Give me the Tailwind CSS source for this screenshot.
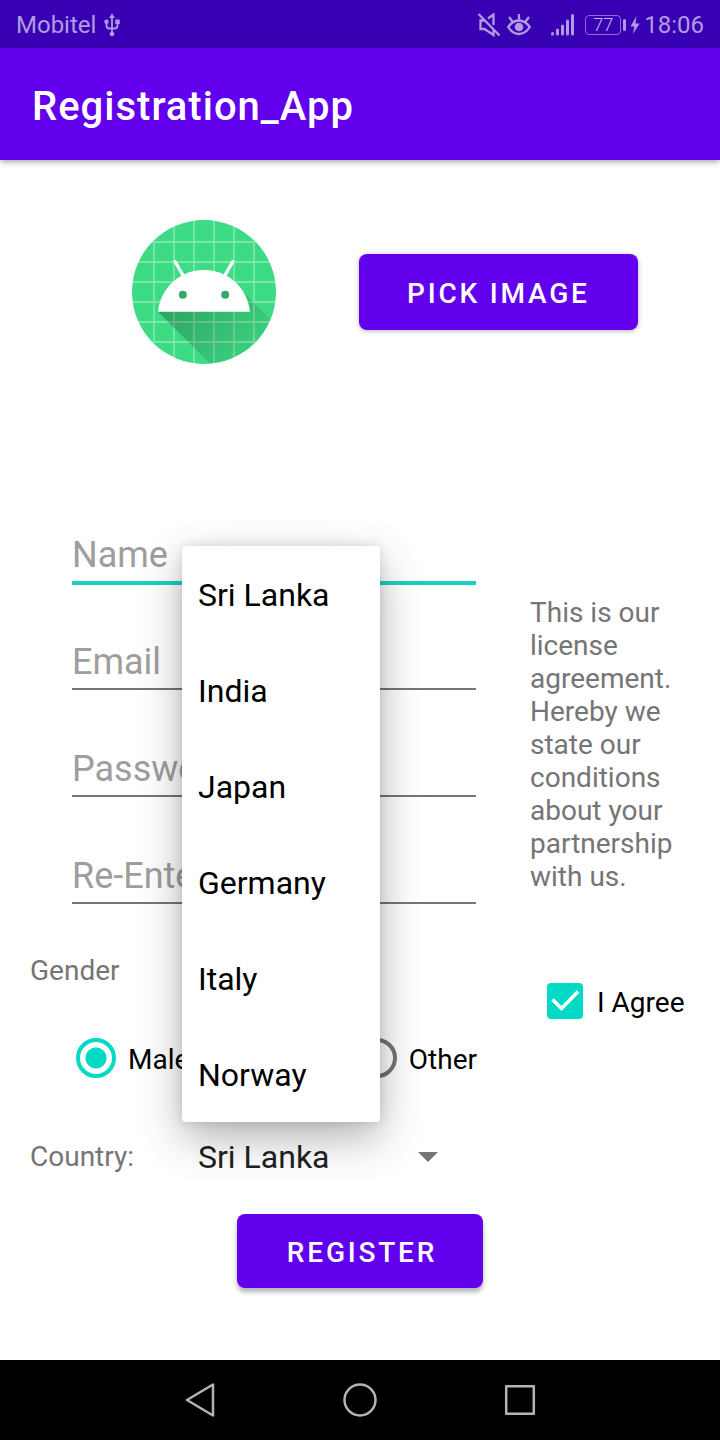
<!DOCTYPE html>
<html lang="en">
<head>
<meta charset="utf-8">
<meta name="viewport" content="width=device-width, initial-scale=1">
<title>Registration_App</title>
<script src="https://cdn.jsdelivr.net/npm/@tailwindcss/browser@4"></script>
</head>
<body class="flex min-h-screen flex-col bg-white font-[Roboto,sans-serif] text-black">

<!-- Status bar -->
<div class="flex h-12 items-center justify-between bg-[#3700b3] px-4 pt-0.5 text-2xl text-[#b49ae4]">
  <div class="flex items-center gap-2">
    <span>Mobitel</span>
    <svg class="h-6 w-4" viewBox="0 0 16 24" fill="none" stroke="currentColor" stroke-width="1.8" aria-label="USB">
      <path d="M8 4v17M2.500 9v3.500q0 3 3 3h5q3 0 3-3V9"/>
      <g fill="currentColor" stroke="none"><path d="M8 .5l3 4.500H5zM11.300 6.500h4.400v4.400h-4.400z"/><circle cx="2.500" cy="8.700" r="2.200"/><circle cx="8" cy="21" r="2.300"/></g>
    </svg>
  </div>
  <div class="flex items-center">
    <svg class="mr-1.5 h-6 w-6" viewBox="0 0 24 24" fill="none" stroke="currentColor" stroke-width="2.300" aria-label="Muted">
      <path d="M1.500 1l21 21.500M7 7.500H3.500v8.500h4l9 6v-5M11 5.500l5.500-4V12"/>
    </svg>
    <svg class="h-6 w-6" viewBox="0 0 24 24" fill="none" stroke="currentColor" stroke-width="2.300" aria-label="Eye comfort">
      <path d="M1.200 14q4.500-6.500 10.800-6.500T22.800 14q-4.500 7-10.800 7T1.200 14zM12 7V1M5.500 8.500L2 4M18.500 8.500L22 4"/>
      <circle cx="12" cy="14" r="4.300" fill="currentColor" stroke="none"/>
    </svg>
    <svg class="ml-5 h-6 w-6" viewBox="0 0 24 24" fill="none" stroke="currentColor" stroke-width="3" stroke-linecap="round" aria-label="Signal">
      <path d="M1.500 21v-.5M6.500 21v-4M11.500 21v-8M16.500 21v-13M21.500 21v-18.500"/>
    </svg>
    <div class="ml-2.5 flex h-5 w-9 items-center justify-center rounded-sm border border-[#8f6bd8] text-lg leading-none font-light text-[#cbb8f0]">77</div>
    <div class="ml-0.5 h-3 w-0.75 rounded-sm bg-[#b49ae4]"></div>
    <svg class="ml-1 h-5 w-2.5" viewBox="0 0 10 20" fill="currentColor" aria-label="Charging"><path d="M6.500 1L.5 11.500h3.800L3 19l6.500-10.500H5.500z"/></svg>
    <span class="ml-1">18:06</span>
  </div>
</div>

<!-- App bar -->
<header class="relative flex h-28 items-center bg-[#6200ee] px-8 pt-1.5 shadow-[0_2px_6px_rgba(0,0,0,0.35)]">
  <h1 class="text-[40px] font-medium tracking-wide text-white">Registration_App</h1>
</header>

<main class="flex-1">
  <form onsubmit="return false">
    <div class="flex items-center gap-[83px] pt-[60px] pl-[132px]">
      <svg class="h-36 w-36" viewBox="18 18 72 72" aria-label="Profile picture">
        <defs>
          <clipPath id="round"><circle cx="54" cy="54" r="36"/></clipPath>
          <linearGradient id="shade" gradientUnits="userSpaceOnUse" x1="42.949" y1="49.598" x2="85.848" y2="92.496">
            <stop offset="0" stop-color="#000" stop-opacity=".27"/><stop offset="1" stop-color="#000" stop-opacity="0"/>
          </linearGradient>
        </defs>
        <g clip-path="url(#round)">
          <path fill="#3ddc84" d="M18 18h72v72H18z"/>
          <path stroke="#fff" stroke-opacity=".32" stroke-width=".9" d="M29 18v72M39 18v72M49 18v72M59 18v72M69 18v72M79 18v72M18 29h72M18 39h72M18 49h72M18 59h72M18 69h72M18 79h72"/>
          <path fill="url(#shade)" d="M31,63.928c0,0 6.4,-11 12.1,-13.1c7.2,-2.6 26,-1.4 26,-1.4l38.1,38.1L107,108.928l-32,-1L31,63.928z"/>
          <path fill="#fff" d="M65.3,45.828l3.8,-6.6c0.2,-0.4 0.1,-0.9 -0.3,-1.1c-0.4,-0.2 -0.9,-0.1 -1.1,0.3l-3.9,6.7c-6.3,-2.8 -13.4,-2.8 -19.7,0l-3.9,-6.7c-0.2,-0.4 -0.7,-0.5 -1.1,-0.3C38.8,38.328 38.7,38.828 38.9,39.228l3.8,6.6C36.2,49.428 31.7,56.028 31,63.928h46C76.3,56.028 71.8,49.428 65.3,45.828z"/>
          <g fill="#34aa69"><circle cx="43.400" cy="55.400" r="2"/><circle cx="64.600" cy="55.400" r="2"/></g>
        </g>
      </svg>
      <button type="button" class="h-19 rounded-lg bg-[#6200ee] px-12 pt-1 text-[28px] font-medium tracking-widest text-white shadow-[0_1px_5px_rgba(0,0,0,0.3)]">PICK IMAGE</button>
    </div>

    <div class="mt-[165px] grid grid-cols-[2fr_1fr]">
      <div>
        <div class="flex flex-col gap-[53px] pr-1 pl-18 text-4xl">
          <input type="text" aria-label="Name" placeholder="Name" class="h-[54px] w-full border-b-2 border-[#1bd0c0] shadow-[0_2px_0_#1bd0c0] outline-none placeholder:text-[#9e9e9e]">
          <input type="email" aria-label="Email" placeholder="Email" class="h-[54px] w-full border-b-2 border-[#757575] outline-none placeholder:text-[#9e9e9e]">
          <input type="password" aria-label="Password" placeholder="Password" class="h-[54px] w-full border-b-2 border-[#757575] outline-none placeholder:text-[#9e9e9e]">
          <input type="password" aria-label="Re-Enter Password" placeholder="Re-Enter Password" class="h-[54px] w-full border-b-2 border-[#757575] outline-none placeholder:text-[#9e9e9e]">
        </div>
        <fieldset>
          <legend class="pt-[50px] pl-[30px] text-[28px] leading-[33px] text-[#757575]">Gender</legend>
          <div class="flex items-center gap-3 pt-[51px] pl-19 text-[28px] leading-9">
            <label class="flex items-center gap-3"><input type="radio" name="gender" checked class="h-10 w-10 appearance-none rounded-full border-4 border-[#757575] checked:border-[#03dac5] checked:bg-[radial-gradient(#03dac5_10px,white_11px)]"><span class="pt-1">Male</span></label>
            <label class="flex items-center gap-3"><input type="radio" name="gender" class="h-10 w-10 appearance-none rounded-full border-4 border-[#757575] checked:border-[#03dac5] checked:bg-[radial-gradient(#03dac5_10px,white_11px)]"><span class="pt-1">Female</span></label>
            <label class="flex items-center gap-3"><input type="radio" name="gender" class="h-10 w-10 appearance-none rounded-full border-4 border-[#757575] checked:border-[#03dac5] checked:bg-[radial-gradient(#03dac5_10px,white_11px)]"><span class="pt-1">Other</span></label>
          </div>
        </fieldset>
      </div>
      <div class="pt-[67px]">
        <p class="pr-[30px] pl-[50px] text-[28px] leading-[33px] text-[#757575]">This is our license agreement. Hereby we state our conditions about your partnership with us.</p>
        <label class="mt-[90px] ml-[67px] flex items-center gap-3.5 text-[28px] leading-8 whitespace-nowrap">
          <span class="grid h-9 w-9">
            <input type="checkbox" checked class="peer col-start-1 row-start-1 h-9 w-9 appearance-none rounded-sm border-4 border-[#757575] checked:border-[#03dac5] checked:bg-[#03dac5]">
            <svg class="pointer-events-none invisible col-start-1 row-start-1 h-9 w-9 peer-checked:visible" viewBox="0 0 36 36" fill="none" stroke="#fff" stroke-width="3.500"><path d="M5.500 16.500l9 9L31 8.500"/></svg>
          </span>
          <span class="pt-1">I Agree</span>
        </label>
      </div>
    </div>

    <div class="mt-11 flex items-center">
      <label for="country" class="w-[182px] pl-[30px] text-[28px] text-[#757575]">Country:</label>
      <div class="relative h-[70px] w-[270px]">
        <ul role="listbox" aria-label="Country" class="absolute bottom-full left-0 w-[198px] rounded-sm bg-white text-[32px] shadow-[0_16px_44px_rgba(0,0,0,0.3),0_0_12px_rgba(0,0,0,0.12)]">
          <li role="option" aria-selected="true" class="flex h-24 items-center px-4 pt-0.5">Sri Lanka</li>
          <li role="option" class="flex h-24 items-center px-4 pt-0.5">India</li>
          <li role="option" class="flex h-24 items-center px-4 pt-0.5">Japan</li>
          <li role="option" class="flex h-24 items-center px-4 pt-0.5">Germany</li>
          <li role="option" class="flex h-24 items-center px-4 pt-0.5">Italy</li>
          <li role="option" class="flex h-24 items-center px-4 pt-0.5">Norway</li>
        </ul>
        <select id="country" class="h-full w-full appearance-none bg-transparent px-4 text-[32px] text-[#212121] outline-none">
          <option>Sri Lanka</option><option>India</option><option>Japan</option><option>Germany</option><option>Italy</option><option>Norway</option>
        </select>
        <svg class="pointer-events-none absolute top-[30px] right-3.5 h-2.5 w-5" viewBox="0 0 20 10" fill="#757575"><path d="M0 0h20L10 10z"/></svg>
      </div>
    </div>

    <div class="mt-[22px] flex justify-center">
      <button type="submit" class="h-[74px] rounded-lg bg-[#6200ee] pt-1 pr-[46px] pl-[50px] text-[28px] font-medium tracking-widest text-white shadow-[0_4px_5px_rgba(0,0,0,0.3)]">REGISTER</button>
    </div>
  </form>
</main>

<!-- System navigation -->
<nav class="flex h-20 items-center justify-center gap-32 bg-black text-[#b4b4b4]">
  <button type="button" aria-label="Back"><svg class="h-8 w-8" viewBox="0 0 32 32" fill="none" stroke="currentColor" stroke-width="2.500" stroke-linejoin="round" overflow="visible"><path d="M29 .5v31L3 16z"/></svg></button>
  <button type="button" aria-label="Home"><svg class="h-8 w-8" viewBox="0 0 32 32" fill="none" stroke="currentColor" stroke-width="2.500" overflow="visible"><circle cx="16" cy="16" r="15.500"/></svg></button>
  <button type="button" aria-label="Recents"><svg class="h-8 w-8" viewBox="0 0 32 32" fill="none" stroke="currentColor" stroke-width="2.500" stroke-linejoin="round"><path d="M2.200 2.200h27.600v27.600H2.200z"/></svg></button>
</nav>
</body>
</html>
